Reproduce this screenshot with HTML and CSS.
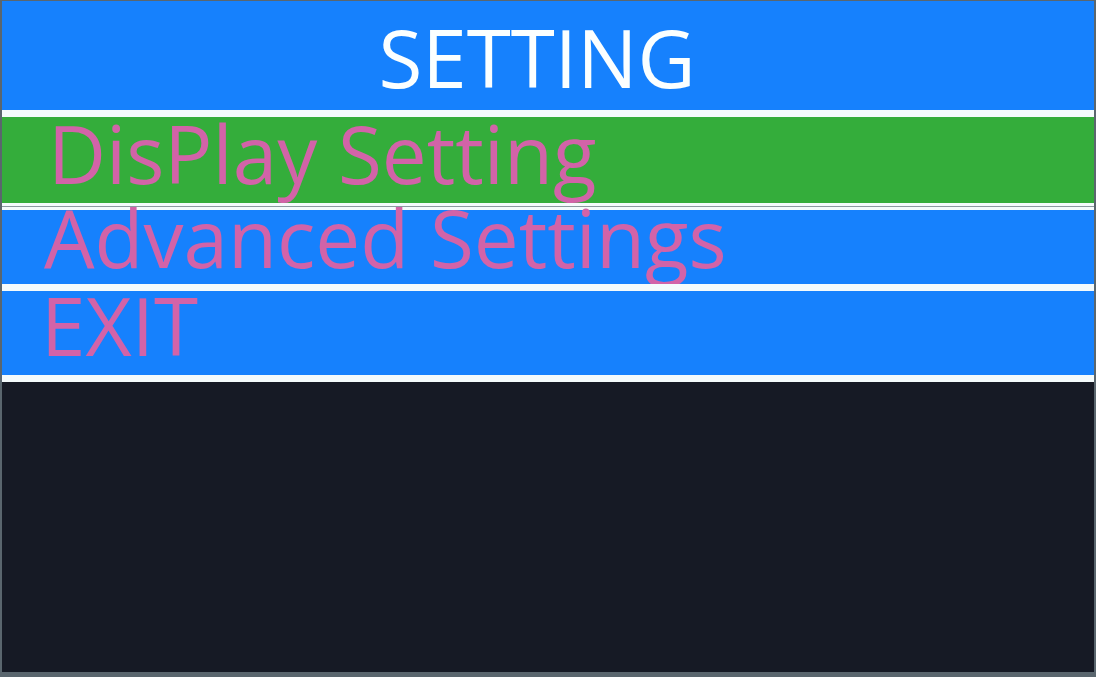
FILE: index.html
```html
<!DOCTYPE html>
<html lang="en">
<head>
<meta charset="utf-8">
<title>SETTING</title>
<link rel="stylesheet" href="styles.css">
</head>
<body>
  <div class="screen">
    <header class="title">SETTING</header>
    <div class="rule"></div>
    <div class="item item-active item-display">DisPlay Setting</div>
    <div class="rule rule-double"></div>
    <div class="item item-advanced">Advanced Settings</div>
    <div class="rule rule-thick"></div>
    <div class="item item-exit">EXIT</div>
    <div class="rule rule-thick"></div>
    <div class="blank"></div>
  </div>
</body>
</html>
```

FILE: styles.css
```css
html, body {
  margin: 0;
  height: 100%;
}

body {
  background: #5a666e;
  padding: 1px 2px 5px 2px;
  box-sizing: border-box;
  font-family: "Open Sans", "Noto Sans", sans-serif;
}

.screen {
  height: 100%;
  display: flex;
  flex-direction: column;
  background: #161a25;
}

.title {
  flex: none;
  height: 109px;
  background: #1681fd;
  color: #fbffff;
  font-size: 80px;
  line-height: 112px;
  text-align: center;
  padding-right: 22px;
}

.rule {
  flex: none;
  height: 7px;
  background: #f4fbfc;
}

.rule-double {
  height: 7px;
  background: linear-gradient(#f4fbfc 0 3px, #8a9aa0 3px 4px, #f4fbfc 4px 7px);
}

.rule-thick {
  height: 7px;
}

.item {
  flex: none;
  background: #1681fd;
  color: #d263a8;
  font-size: 80px;
  white-space: nowrap;
}

.item-active {
  background: #34ad3b;
}

.item-display {
  height: 86px;
  line-height: 72px;
  padding-left: 46px;
}

.item-advanced {
  height: 74px;
  line-height: 54px;
  padding-left: 42px;
}

.item-exit {
  height: 84px;
  line-height: 68px;
  padding-left: 39px;
}

.blank {
  flex: 1;
  background: #161a25;
}
```
